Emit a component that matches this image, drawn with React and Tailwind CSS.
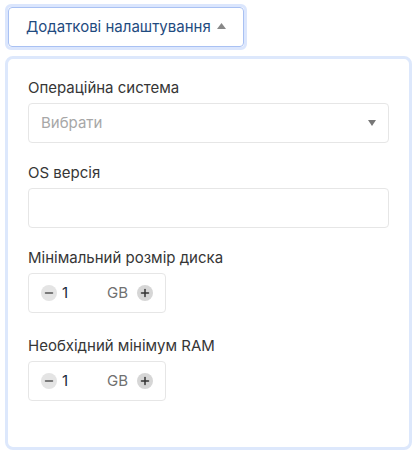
import { Minus, Plus } from 'lucide-react';

const NumberField = ({ value, unit }) => (
  <div className="flex h-10 w-[138px] items-center rounded border border-[#e6e6e6] bg-white pl-[12px] pr-[12px]">
    <button className="flex h-4 w-4 items-center justify-center rounded-full bg-[#e4e4e4] text-[#555]">
      <Minus size={12} strokeWidth={3} />
    </button>
    <span className="ml-[5px] flex-1 text-[15px] text-[#1b2a3a]">{value}</span>
    <span className="mr-[9px] text-[15px] text-[#707070]">{unit}</span>
    <button className="flex h-4 w-4 items-center justify-center rounded-full bg-[#d6d6d6] text-[#333]">
      <Plus size={12} strokeWidth={3} />
    </button>
  </div>
);

const Label = ({ children }) => (
  <label className="mb-[5px] block text-[15px] leading-5 text-[#363636]">{children}</label>
);

export default function App() {
  return (
    <div className="min-h-screen bg-white pl-[5px] pr-[6px] pt-[4px] font-['Inter',sans-serif]">
      <button className="flex h-[46px] items-center rounded-[6px] border-[3px] border-[#dbe6fd] bg-white">
        <span className="flex h-full items-center gap-[6px] rounded-[4px] border border-[#a9c1f3] pl-[17px] pr-[17px] text-[15px] text-[#1f4b80]">
          Додаткові налаштування
          <svg width="9" height="6" viewBox="0 0 9 6" className="mt-[-2px]">
            <path d="M4.5 0 L9 6 L0 6 Z" fill="#888" />
          </svg>
        </span>
      </button>

      <div className="mt-[6px] h-[394px] rounded-[8px] border-[3px] border-[#dde8fc] bg-white px-[20px] pt-[19px]">
        <div className="mb-[20px]">
          <Label>Операційна система</Label>
          <div className="flex h-10 items-center justify-between rounded border border-[#e6e6e6] bg-white pl-[12px] pr-[12px]">
            <span className="text-[15px] text-[#a7a7a7]">Вибрати</span>
            <svg width="8" height="6" viewBox="0 0 8 6">
              <path d="M0 0 L8 0 L4 6 Z" fill="#777" />
            </svg>
          </div>
        </div>

        <div className="mb-[20px]">
          <Label>OS версія</Label>
          <div className="h-10 rounded border border-[#e6e6e6] bg-white" />
        </div>

        <div className="mb-[23px]">
          <Label>Мінімальний розмір диска</Label>
          <NumberField value="1" unit="GB" />
        </div>

        <div>
          <Label>Необхідний мінімум RAM</Label>
          <NumberField value="1" unit="GB" />
        </div>
      </div>
    </div>
  );
}
